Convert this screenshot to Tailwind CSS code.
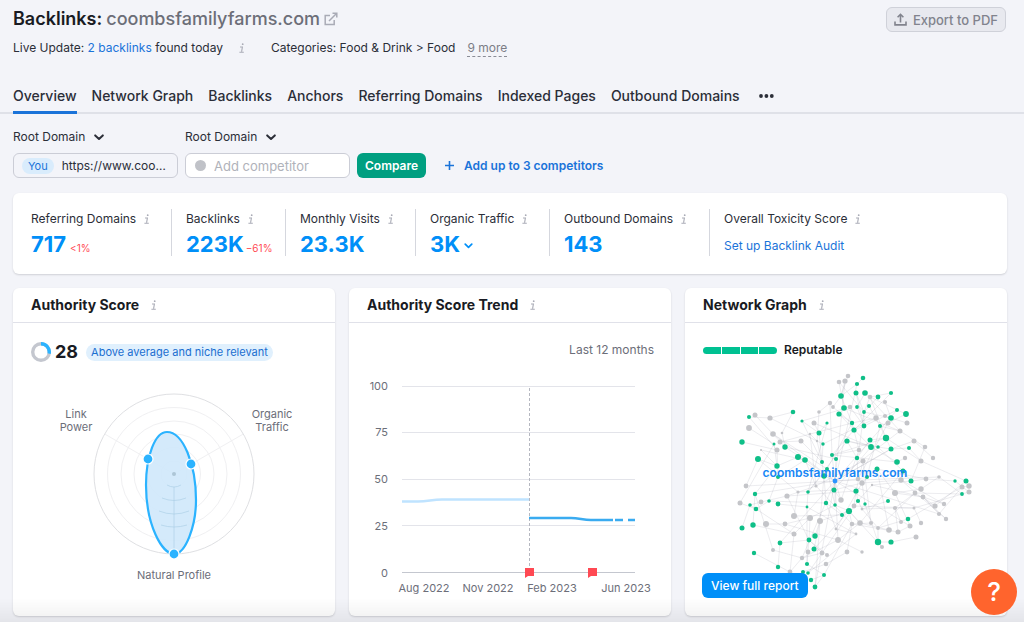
<!DOCTYPE html>
<html lang="en">
  <head>
    <meta charset="UTF-8" />
    <meta name="viewport" content="width=device-width, initial-scale=1" />
    <title>Backlinks: coombsfamilyfarms.com</title>
    <script src="https://cdn.jsdelivr.net/npm/@tailwindcss/browser@4"></script>
  </head>
  <body class="min-h-screen bg-[#f3f4f9] font-['Inter',sans-serif] text-[13px] leading-5 text-[#2b2e38]">
    <!-- shared icons -->
    <svg class="hidden">
      <symbol id="info" viewBox="0 0 6 10">
        <path d="M1 4h2.4L2.6 8.6M.4 9.3h4.4" fill="none" stroke="currentColor" stroke-width="1.1" />
        <circle cx="3.7" cy="1.2" r=".9" fill="currentColor" />
      </symbol>
      <symbol id="chevron" viewBox="0 0 10 7">
        <path d="M1.2 1.4L5 5l3.8-3.6" fill="none" stroke="currentColor" stroke-width="2" stroke-linecap="round" stroke-linejoin="round" />
      </symbol>
    </svg>

    <header class="pl-[13px] pr-[18px] pt-[7px]">
      <div class="flex items-start justify-between">
        <h1 class="flex items-center text-[18px] leading-6 font-semibold text-[#191b23]">
          Backlinks:<span class="ml-1 font-medium text-[#6c6e78]">coombsfamilyfarms.com</span>
          <a href="#" aria-label="Open site" class="ml-1 text-[#a9abb6]">
            <svg class="h-[14px] w-[14px]" viewBox="0 0 14 14" fill="none" stroke="currentColor" stroke-width="1.5">
              <path d="M6 3.5H1.2v9h9V8M8.5 1.2h4.3v4.3M12.5 1.5L5 9" />
            </svg>
          </a>
        </h1>
        <button disabled class="flex h-[25px] items-center gap-[6px] rounded-md border border-[#cfd1d9] bg-[#e8e9ef] px-[7px] font-medium text-[#81838d]">
          <svg class="h-[13px] w-[13px]" viewBox="0 0 13 13" fill="none" stroke="currentColor" stroke-width="1.6">
            <path d="M1 8.5v3.4h11V8.5M6.5 9.5V1.5M3.6 4.2l2.9-2.9 2.9 2.9" />
          </svg>
          Export to PDF
        </button>
      </div>
      <div class="mt-[6px] flex items-center text-[12px]">
        <p>Live Update: <a href="#" class="text-[#1a73d9]">2 backlinks</a> found today</p>
        <svg class="ml-4 h-[10px] w-[6px] text-[#a9abb6]"><use href="#info" /></svg>
        <p class="ml-[26px]">Categories: Food &amp; Drink &gt; Food</p>
        <button class="ml-3 border-b border-dashed border-[#8a8c96] leading-4 text-[#7b7d86]">9 more</button>
      </div>
    </header>

    <nav class="mt-[28px] flex h-[28px] gap-[15px] border-b-2 border-[#dfe1e8] pl-[13px] text-[14px] font-medium whitespace-nowrap">
      <a href="#" class="h-[28px] border-b-[3px] border-[#1a73d9]">Overview</a>
      <a href="#">Network Graph</a>
      <a href="#">Backlinks</a>
      <a href="#">Anchors</a>
      <a href="#">Referring Domains</a>
      <a href="#">Indexed Pages</a>
      <a href="#">Outbound Domains</a>
      <button aria-label="More" class="ml-1 flex h-5 items-center">
        <svg class="h-1 w-[15px]" viewBox="0 0 15 4" fill="currentColor">
          <circle cx="2" cy="2" r="1.9" /><circle cx="7.4" cy="2" r="1.9" /><circle cx="12.8" cy="2" r="1.9" />
        </svg>
      </button>
    </nav>

    <main class="pl-[13px] pr-[17px]">
      <form class="flex items-end gap-[7px] pt-[13px]">
        <div class="w-[165px]">
          <div class="flex items-center text-[12px]">
            <select aria-label="Your scope" class="appearance-none"><option>Root Domain</option></select>
            <svg class="ml-2 h-[7px] w-[10px]"><use href="#chevron" /></svg>
          </div>
          <label class="mt-[6px] flex h-[25px] items-center gap-2 rounded-md border border-[#cbcdd6] pr-2 pl-2">
            <span class="rounded-full bg-[#d9ecfc] px-[6px] text-[11px] leading-4 text-[#1a73d9]">You</span>
            <input value="https://www.coombsfamilyfarms.com" class="w-full min-w-0 overflow-hidden text-[12px] text-ellipsis outline-none" />
          </label>
        </div>
        <div class="w-[165px]">
          <div class="flex items-center text-[12px]">
            <select aria-label="Competitor scope" class="appearance-none"><option>Root Domain</option></select>
            <svg class="ml-2 h-[7px] w-[10px]"><use href="#chevron" /></svg>
          </div>
          <label class="mt-[6px] flex h-[25px] items-center gap-2 rounded-md border border-[#cbcdd6] bg-white px-[9px]">
            <span class="h-[11px] w-[11px] shrink-0 rounded-full bg-[#c0c2c8]"></span>
            <input placeholder="Add competitor" class="w-full min-w-0 text-[13px] outline-none placeholder:text-[#b0b2ba]" />
          </label>
        </div>
        <button type="button" class="h-[25px] rounded-md bg-[#009f81] px-2 text-[12px] font-semibold text-white">Compare</button>
        <button type="button" class="ml-3 flex h-[25px] items-center gap-[10px] text-[12px] font-semibold text-[#1a73d9]">
          <svg class="h-[9px] w-[9px]" viewBox="0 0 9 9" stroke="currentColor" stroke-width="1.6"><path d="M4.5 0v9M0 4.5h9" /></svg>
          Add up to 3 competitors
        </button>
      </form>

      <section class="mt-[15px] flex rounded-md bg-white px-[18px] pt-4 pb-[18px] text-[12px] whitespace-nowrap shadow-[0_1px_2px_rgba(25,27,35,0.16)]">
        <div class="w-[140px]">
          <h3 class="flex items-center gap-2">Referring Domains <svg class="h-[10px] w-[6px] text-[#a9abb6]"><use href="#info" /></svg></h3>
          <p class="mt-[3px] flex h-6 items-baseline gap-1 leading-6"><a href="#" class="text-[22px] font-bold text-[#008ff8]">717</a><span class="text-[10px] text-[#ff4953]">&lt;1%</span></p>
        </div>
        <div class="w-[114px] border-l border-[#d5d7de] pl-[14px]">
          <h3 class="flex items-center gap-2">Backlinks <svg class="h-[10px] w-[6px] text-[#a9abb6]"><use href="#info" /></svg></h3>
          <p class="mt-[3px] flex h-6 items-baseline gap-[2px] leading-6"><a href="#" class="text-[22px] font-bold text-[#008ff8]">223K</a><span class="text-[10px] text-[#ff4953]">−61%</span></p>
        </div>
        <div class="w-[130px] border-l border-[#d5d7de] pl-[14px]">
          <h3 class="flex items-center gap-2">Monthly Visits <svg class="h-[10px] w-[6px] text-[#a9abb6]"><use href="#info" /></svg></h3>
          <p class="mt-[3px] flex h-6 leading-6"><a href="#" class="text-[22px] font-bold text-[#008ff8]">23.3K</a></p>
        </div>
        <div class="w-[134px] border-l border-[#d5d7de] pl-[14px]">
          <h3 class="flex items-center gap-2">Organic Traffic <svg class="h-[10px] w-[6px] text-[#a9abb6]"><use href="#info" /></svg></h3>
          <button class="mt-[3px] flex h-6 items-center gap-1 text-[22px] leading-6 font-bold text-[#008ff8]">3K <svg class="mt-1 h-[6px] w-[9px]"><use href="#chevron" /></svg></button>
        </div>
        <div class="w-[160px] border-l border-[#d5d7de] pl-[14px]">
          <h3 class="flex items-center gap-2">Outbound Domains <svg class="h-[10px] w-[6px] text-[#a9abb6]"><use href="#info" /></svg></h3>
          <p class="mt-[3px] flex h-6 leading-6"><a href="#" class="text-[22px] font-bold text-[#008ff8]">143</a></p>
        </div>
        <div class="border-l border-[#d5d7de] pl-[14px]">
          <h3 class="flex items-center gap-2">Overall Toxicity Score <svg class="h-[10px] w-[6px] text-[#a9abb6]"><use href="#info" /></svg></h3>
          <p class="mt-[7px]"><a href="#" class="text-[#1a73d9]">Set up Backlink Audit</a></p>
        </div>
      </section>

      <div class="mt-[14px] grid grid-cols-3 gap-[14px]">
        <section class="rounded-md bg-white shadow-[0_1px_2px_rgba(25,27,35,0.16)]">
          <h2 class="flex h-[35px] items-center gap-3 border-b border-[#e0e1e9] px-[18px] text-[14px] font-bold text-[#191b23]">
            Authority Score <svg class="h-[10px] w-[6px] text-[#a9abb6]"><use href="#info" /></svg>
          </h2>
          <div class="px-[17px] pt-[17px] pb-[21px]">
            <div class="flex h-6 items-center">
              <svg class="ml-[1px] h-5 w-5" viewBox="0 0 20 20" fill="none" stroke-width="3.4">
                <circle cx="10" cy="10" r="8.3" stroke="#c4c7cf" />
                <path d="M10 1.7A8.3 8.3 0 0 1 18.1 11.6" stroke="#2bb3ff" />
              </svg>
              <b class="ml-1 text-[18px] text-[#191b23]">28</b>
              <span class="ml-2 rounded-full bg-[#e0f0fd] px-[5px] text-[11px] leading-[17px] text-[#1a6ed0]">Above average and niche relevant</span>
            </div>
            <svg class="mt-5 w-full" viewBox="-1 0 288 211">
              <g fill="none" stroke="#f0f0f2">
                <circle cx="143" cy="90" r="80" stroke="#dfe0e3" />
                <circle cx="143" cy="90" r="66.5" />
                <circle cx="143" cy="90" r="53" />
                <circle cx="143" cy="90" r="40" />
                <circle cx="143" cy="90" r="26.5" />
                <circle cx="143" cy="90" r="13" />
                <path d="M143 90L73.7 50M143 90l69.3-40M143 90v80" />
              </g>
              <path d="M143 170C155 170 165 141 165 116C165 80 152 48 136 48C124 48 115 72 115 101C115 141 131 170 143 170Z" fill="#cfe8fb" fill-opacity=".9" stroke="#2bb3ff" stroke-width="2.2" />
              <path d="M143 103v67M136 101q7 4 14 0M131 114q12 5 24 0M128 127q15 6 30 0M130 141q13 4 26 0" fill="none" stroke="#a9cde4" stroke-opacity=".6" />
              <circle cx="143" cy="90" r="2" fill="#adc6d6" />
              <g fill="#2bb3ff" stroke="#fff" stroke-width="1.2">
                <circle cx="117" cy="75" r="5" />
                <circle cx="160" cy="80" r="5" />
                <circle cx="143" cy="170" r="5" />
              </g>
              <g class="fill-[#6c6e79] text-[11px]" text-anchor="middle">
                <text x="45" y="34">Link</text>
                <text x="45" y="47">Power</text>
                <text x="241" y="34">Organic</text>
                <text x="241" y="47">Traffic</text>
                <text x="143" y="195">Natural Profile</text>
              </g>
            </svg>
          </div>
        </section>

        <section class="rounded-md bg-white shadow-[0_1px_2px_rgba(25,27,35,0.16)]">
          <h2 class="flex h-[35px] items-center gap-3 border-b border-[#e0e1e9] px-[18px] text-[14px] font-bold text-[#191b23]">
            Authority Score Trend <svg class="h-[10px] w-[6px] text-[#a9abb6]"><use href="#info" /></svg>
          </h2>
          <div class="px-[17px] pt-[17px]">
            <p class="text-right text-[12px] text-[#6c6e79]">Last 12 months</p>
            <svg class="mt-[15px] w-full" viewBox="0 0 288 225">
              <path d="M36 11.5h233M36 57.5h233M36 104.5h233M36 150.5h233" stroke="#e3e4ea" />
              <path d="M36 197.5h233" stroke="#c4c7cf" />
              <path d="M163.5 13v184" stroke="#b5b7c0" stroke-dasharray="3 2" />
              <g fill="none" stroke-width="2.4">
                <path d="M36 126.5h16c10 0 14-2 24-2h87" stroke="#bfe3ff" />
                <path d="M163 143h42c8 0 12 2 20 2h22M249 145h8M262 145h7" stroke="#3aabf0" />
              </g>
              <path d="M159 193h9v8h-6l-3 2zM222 193h9v8h-6l-3 2z" fill="#ff4953" />
              <g class="fill-[#6c6e79] text-[11px]">
                <g text-anchor="end">
                  <text x="22" y="15">100</text>
                  <text x="22" y="61">75</text>
                  <text x="22" y="108">50</text>
                  <text x="22" y="155">25</text>
                  <text x="22" y="202">0</text>
                </g>
                <g text-anchor="middle">
                  <text x="58" y="217">Aug 2022</text>
                  <text x="122" y="217">Nov 2022</text>
                  <text x="186" y="217">Feb 2023</text>
                  <text x="260" y="217">Jun 2023</text>
                </g>
              </g>
            </svg>
          </div>
        </section>

        <section class="rounded-md bg-white shadow-[0_1px_2px_rgba(25,27,35,0.16)]">
          <h2 class="flex h-[35px] items-center gap-3 border-b border-[#e0e1e9] px-[18px] text-[14px] font-bold text-[#191b23]">
            Network Graph <svg class="h-[10px] w-[6px] text-[#a9abb6]"><use href="#info" /></svg>
          </h2>
          <div class="px-[17px] pt-[17px]">
            <div class="flex items-center gap-[7px]">
              <div class="ml-[1px] flex w-[74px] gap-px overflow-hidden rounded-full">
                <span class="h-[7px] flex-1 bg-[#00c192]"></span>
                <span class="h-[7px] flex-1 bg-[#00c192]"></span>
                <span class="h-[7px] flex-1 bg-[#00c192]"></span>
                <span class="h-[7px] flex-1 bg-[#00c192]"></span>
              </div>
              <span class="text-[12px] font-semibold text-[#191b23]">Reputable</span>
            </div>
            <div class="relative mt-[6px]">
              <svg id="network" class="w-full" viewBox="2 6 288 236"></svg>
              <button class="absolute bottom-1 left-0 h-[25px] rounded-md bg-[#008ff8] px-[9px] text-[12px] font-medium text-white">View full report</button>
            </div>
          </div>
        </section>
      </div>
    </main>

    <div class="pointer-events-none fixed inset-x-0 bottom-0 h-6 bg-linear-to-b from-transparent to-black/6"></div>
    <button aria-label="Help" class="fixed right-[7px] bottom-[7px] flex h-[46px] w-[46px] items-center justify-center rounded-full bg-[#ff642d] text-[26px] font-medium text-white">?</button>

    <script>
      // x, y, radius
      const green = [
        [49,57,2],[93,52,2.3],[102,61,1.6],[42,82,2.7],[58,99,3],[74,84,1.5],[85,87,2.7],[98,97,3],[105,100,2.8],[77,106,2.7],
        [122,102,2],[132,95,2],[136,99,2],[119,73,2.5],[127,63,1.6],[123,84,1.7],[141,36,2.8],[157,24,2.1],[156,33,2.5],[144,48,2.8],
        [139,54,2.6],[157,47,1.9],[152,63,2.2],[154,70,2.6],[147,81,2.6],[157,98,2.2],[124,116,2.7],[78,117,2],[127,109,2],
        [163,18,2.3],[165,33,2.8],[178,37,2.4],[191,33,2.1],[169,46,2],[164,52,1.9],[197,50,2],[206,54,2.9],[191,58,2.8],
        [180,66,2],[164,66,2.4],[186,78,3.2],[170,80,2.5],[171,87,2.9],[178,87,1.8],[191,89,2.5],[209,88,2],[197,102,2.8],
        [177,109,2.5],[203,111,2.5],[167,117,2],[211,121,2.5],[255,121,1.7],[266,121,2.5],[55,134,2.2],[50,145,1.8],[56,149,2.3],
        [69,141,1.8],[78,144,2.4],[108,132,1.8],[107,147,1.4],[134,130,2.5],[126,143,2.2],[135,145,1.8],[156,131,2.6],[158,141,2.1],
        [149,151,3.1],[142,155,2],[42,168,2.5],[53,165,2.7],[115,176,2.7],[109,180,2.4],[80,183,2.4],[114,189,2.5],[54,193,2.2],
        [107,204,2.1],[78,207,2.2],[124,215,2],[103,212,2],[108,213,1.8],[111,220,2.2],[115,227,2.4],[188,141,2],[165,144,1.7],
        [208,159,2.3],[178,182,3.2],[191,182,2.6],[262,134,1.9],
      ];
      const gray = [
        [148,16,2.3],[139,22,2.3],[145,21,2.6],[130,43,2.2],[133,47,1.9],[150,47,2.3],[119,52,1.8],[114,63,2.5],[55,55,2.5],
        [70,58,2.6],[49,68,2.9],[73,74,2.8],[82,73,1.3],[80,82,2.5],[77,90,2.5],[61,90,1],[101,81,2.5],[110,74,1.2],[117,81,1.2],
        [159,90,2.3],[46,126,2.4],[116,126,1.6],[158,119,2.3],[170,37,2.3],[185,42,2.1],[176,58,2.7],[185,56,2.1],[188,63,2.5],
        [207,63,2.5],[200,71,2.5],[214,81,2.5],[225,87,2.3],[205,98,2.2],[221,101,2.5],[233,98,2.2],[163,101,2.5],[201,120,2.7],
        [226,119,2.4],[239,117,1.8],[162,123,2.7],[172,125,1.2],[262,127,2.5],[269,126,2.7],[40,143,2.5],[61,142,2.4],[87,136,2.6],
        [98,132,1.6],[141,140,2.7],[154,146,2.4],[94,156,3],[110,158,3],[120,161,3],[66,164,3],[85,164,2.4],[94,174,2.5],
        [136,169,1.4],[138,180,2.9],[152,164,2.3],[160,163,2.8],[156,174,1.4],[147,192,2.4],[73,190,2],[108,192,2.4],[122,193,2.4],
        [127,195,2],[102,198,2.2],[126,204,2.3],[90,212,2.4],[195,133,3],[215,133,2.4],[221,129,2.7],[223,137,2.4],[235,146,2.6],
        [244,144,2.2],[239,154,2.1],[246,159,2.2],[195,148,2.1],[214,148,1.5],[162,149,1.4],[171,163,2.1],[178,168,1.9],
        [189,170,2.8],[201,162,2],[210,166,2.5],[221,163,2.2],[198,172,2.5],[216,177,2.5],[182,187,2],[162,192,1.7],[269,132,2.5],
      ];
      const center = [135, 121, 2.4];
      const nodes = [center, ...green, ...gray];
      const dist = (a, b) => Math.hypot(a[0] - b[0], a[1] - b[1]);

      // Link every node to one that is nearer to the centre, and some to the centre itself
      let edges = "";
      nodes.forEach((node, i) => {
        if (i === 0) return;
        const inner = nodes
          .filter((n) => dist(n, center) < dist(node, center) - 6)
          .sort((a, b) => dist(a, node) - dist(b, node));
        [inner[i % 5], i % 2 ? inner[8 + (i % 17)] : null, i % 9 === 0 ? center : null].forEach((n) => {
          if (n) edges += `M${node[0]} ${node[1]}L${n[0]} ${n[1]}`;
        });
      });

      const dots = (list, color) =>
        list.map(([x, y, r]) => `<circle cx="${x}" cy="${y}" r="${r}" fill="${color}" />`).join("");

      document.getElementById("network").innerHTML =
        `<path d="${edges}" fill="none" stroke="#8a8e9b" stroke-opacity=".24" stroke-width=".7" />` +
        dots(gray, "#c4c5c9") +
        dots(green, "#0fbf88") +
        dots([center], "#2b94ff") +
        `<text x="135" y="117" text-anchor="middle" font-size="12" font-weight="600" fill="#1686f5">coombsfamilyfarms.com</text>`;
    </script>
  </body>
</html>
